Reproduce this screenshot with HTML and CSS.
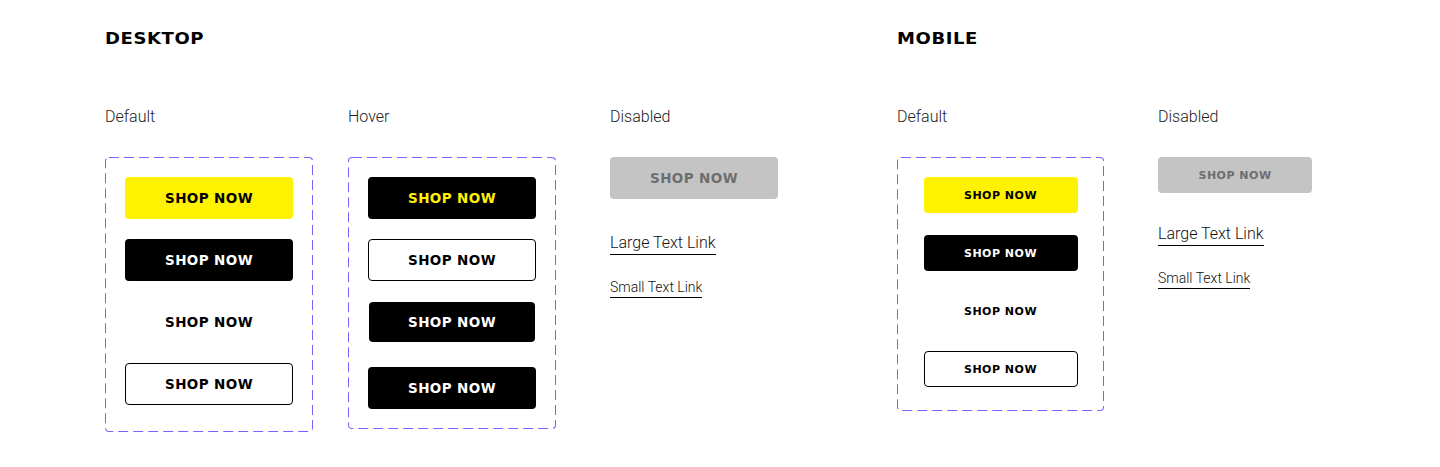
FILE: index.html
```html
<!DOCTYPE html>
<html lang="en">
<head>
    <meta charset="UTF-8">
    <meta name="viewport" content="width=device-width, initial-scale=1.0">
    <title>Buttons</title>
    <link rel="stylesheet" href="styles.css">
</head>
<body>
    <div class="sections">
        <section class="section">
            <h2 class="section-title"><span>DESKTOP</span></h2>
            <div class="cols cols--desktop">
                <div class="col">
                    <p class="label">Default</p>
                    <div class="set">
                        <button class="btn btn--yellow">SHOP NOW</button>
                        <button class="btn btn--black">SHOP NOW</button>
                        <button class="btn btn--text">SHOP NOW</button>
                        <button class="btn btn--outline">SHOP NOW</button>
                    </div>
                </div>
                <div class="col">
                    <p class="label">Hover</p>
                    <div class="set set--hover">
                        <button class="btn btn--black btn--yellow-text">SHOP NOW</button>
                        <button class="btn btn--outline">SHOP NOW</button>
                        <button class="btn btn--black btn--pressed">SHOP NOW</button>
                        <button class="btn btn--black btn--last">SHOP NOW</button>
                    </div>
                </div>
                <div class="col col--disabled">
                    <p class="label">Disabled</p>
                    <button class="btn btn--disabled" disabled>SHOP NOW</button>
                    <a href="#" class="link link--large">Large Text Link</a>
                    <a href="#" class="link link--small">Small Text Link</a>
                </div>
            </div>
        </section>

        <section class="section">
            <h2 class="section-title"><span>MOBILE</span></h2>
            <div class="cols cols--mobile">
                <div class="col">
                    <p class="label">Default</p>
                    <div class="set set--mobile">
                        <button class="btn btn--yellow">SHOP NOW</button>
                        <button class="btn btn--black">SHOP NOW</button>
                        <button class="btn btn--text">SHOP NOW</button>
                        <button class="btn btn--outline">SHOP NOW</button>
                    </div>
                </div>
                <div class="col col--disabled col--mobile">
                    <p class="label">Disabled</p>
                    <button class="btn btn--disabled" disabled>SHOP NOW</button>
                    <a href="#" class="link link--large">Large Text Link</a>
                    <a href="#" class="link link--small">Small Text Link</a>
                </div>
            </div>
        </section>
    </div>
</body>
</html>
```

FILE: styles.css
```css
body {
    margin: 0;
    padding: 29px 0 0 105px;
    background-color: #fff;
    font-family: 'Roboto', 'Liberation Sans', sans-serif;
    color: #111;
}

.sections {
    display: flex;
    gap: 119px;
}

.section-title {
    margin: 0;
    height: 20px;
    font-family: 'DejaVu Sans', sans-serif;
    font-size: 15px;
    font-weight: bold;
    line-height: 20px;
    letter-spacing: 0.5px;
    color: #000;
}

.section-title span {
    display: inline-block;
    transform: scaleX(1.2);
    transform-origin: left center;
}

.cols {
    display: flex;
    margin-top: 58px;
}

.cols--desktop {
    gap: 35px;
}

.cols--mobile {
    gap: 54px;
}

.col {
    display: flex;
    flex-direction: column;
    align-items: flex-start;
}

.col--disabled {
    margin-left: 19px;
}

.col--mobile {
    margin-left: 0;
}

.label {
    margin: 0 0 30px;
    font-size: 16px;
    font-weight: 300;
    line-height: 20px;
    color: #222;
}

/* dashed figma-style frame round each set of states */
.set {
    display: flex;
    flex-direction: column;
    align-items: center;
    gap: 20px;
    width: 208px;
    padding: 20px 0 27px;
    box-sizing: border-box;
    border-radius: 4px;
    background-image: url("data:image/svg+xml,%3Csvg xmlns='http://www.w3.org/2000/svg' width='100%25' height='100%25'%3E%3Crect x='0' y='0' width='100%25' height='100%25' rx='4' fill='none' stroke='%237B61FF' stroke-width='2' stroke-dasharray='10 5'/%3E%3C/svg%3E");
    background-repeat: no-repeat;
}

.set--hover {
    padding-bottom: 20px;
}

.set--mobile {
    width: 207px;
    gap: 22px;
    padding-bottom: 24px;
}

.btn {
    display: flex;
    align-items: center;
    justify-content: center;
    width: 168px;
    height: 42px;
    padding: 0;
    box-sizing: border-box;
    border: none;
    border-radius: 4px;
    background: transparent;
    font-family: 'DejaVu Sans', sans-serif;
    font-size: 13.5px;
    font-weight: bold;
    letter-spacing: 0.4px;
    color: #000;
    cursor: pointer;
}

.set--mobile .btn,
.col--mobile .btn {
    width: 154px;
    height: 36px;
    font-size: 11px;
    letter-spacing: 0.5px;
}

.btn--yellow {
    background-color: #fff200;
}

.btn--black {
    background-color: #000;
    color: #fff;
}

.btn--yellow-text {
    color: #fff200;
}

.btn--outline {
    border: 1px solid #000;
    background-color: #fff;
}

.btn--pressed {
    width: 166px;
    height: 40px;
    margin: 1px 0;
}

.btn--last {
    margin-top: 4px;
}

.btn--disabled {
    background-color: #c4c4c4;
    color: #6e6e6e;
    cursor: default;
}

.link {
    display: inline-block;
    color: #111;
    font-weight: 300;
    text-decoration: none;
    border-bottom: 1px solid #000;
}

.link--large {
    margin-top: 34px;
    font-size: 16px;
    line-height: 19px;
    padding-bottom: 2px;
}

.link--small {
    margin-top: 24px;
    font-size: 14px;
    line-height: 17px;
    padding-bottom: 1px;
}

.col--mobile .link--large {
    margin-top: 31px;
}
```
